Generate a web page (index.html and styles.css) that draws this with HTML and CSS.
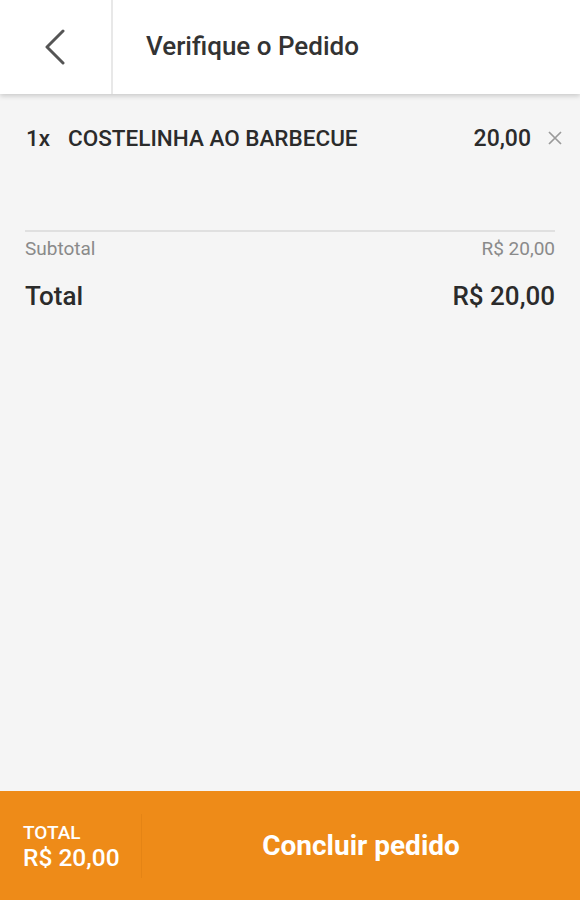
FILE: index.html
```html
<!DOCTYPE html>
<html lang="pt-BR">
<head>
<meta charset="utf-8">
<title>Verifique o Pedido</title>
<link rel="stylesheet" href="styles.css">
</head>
<body>
<div class="app">
  <header class="topbar">
    <button class="back" aria-label="Voltar">
      <svg width="24" height="36" viewBox="0 0 24 36"><path d="M19 2 L3 18 L19 34" fill="none" stroke="#555" stroke-width="3" stroke-linecap="round" stroke-linejoin="round"/></svg>
    </button>
    <h1 class="title">Verifique o Pedido</h1>
  </header>
  <main class="content">
    <div class="item">
      <span class="qty">1x</span>
      <span class="name">COSTELINHA AO BARBECUE</span>
      <span class="price">20,00</span>
      <span class="remove">
        <svg width="16" height="16" viewBox="0 0 16 16"><path d="M2 2 L14 14 M14 2 L2 14" stroke="#9a9a9a" stroke-width="1.7" fill="none"/></svg>
      </span>
    </div>
    <div class="summary">
      <div class="row sub"><span>Subtotal</span><span>R$ 20,00</span></div>
      <div class="row total"><span>Total</span><span>R$ 20,00</span></div>
    </div>
  </main>
  <footer class="bottombar">
    <div class="foot-total">
      <span class="foot-label">TOTAL</span>
      <span class="foot-value">R$ 20,00</span>
    </div>
    <button class="confirm">Concluir pedido</button>
  </footer>
</div>
</body>
</html>
```
FILE: styles.css
```css
* { box-sizing: border-box; }
html, body { margin: 0; padding: 0; }
body {
  font-family: Roboto, "Liberation Sans", sans-serif;
  background: #f5f5f5;
  color: #333;
}
.app {
  height: 900px;
  display: flex;
  flex-direction: column;
}
.topbar {
  height: 94px;
  background: #fff;
  display: flex;
  align-items: stretch;
  box-shadow: 0 2px 5px rgba(0,0,0,0.18);
  position: relative;
  z-index: 1;
  flex-shrink: 0;
}
.back {
  width: 113px;
  border: 0;
  border-right: 2px solid #e8e8e8;
  background: transparent;
  padding: 0;
  display: flex;
  align-items: center;
  justify-content: center;
}
.title {
  margin: 0 0 0 33px;
  align-self: center;
  font-size: 26px;
  font-weight: 500;
  color: #333;
  padding-bottom: 2px;
}
.content {
  flex: 1;
  padding: 0 25px;
}
.item {
  display: flex;
  align-items: center;
  height: 86px;
  padding-top: 2px;
  font-size: 22.5px;
  font-weight: 500;
  color: #2b2b2b;
}
.qty { width: 43px; padding-left: 1px; }
.name { flex: 1; }
.price { margin-right: 16px; font-size: 23px; }
.remove { display: flex; align-items: center; margin-right: -8px; }
.summary {
  margin-top: 50px;
  border-top: 2px solid #e0e0e0;
}
.row {
  display: flex;
  justify-content: space-between;
}
.row.sub {
  font-size: 19px;
  color: #8a8a8a;
  padding-top: 5px;
}
.row.total {
  font-size: 26px;
  font-weight: 500;
  color: #2b2b2b;
  padding-top: 21px;
}
.bottombar {
  height: 109px;
  background: #ee8b18;
  display: flex;
  align-items: center;
  flex-shrink: 0;
}
.foot-total {
  width: 142px;
  height: 64px;
  border-right: 1px solid rgba(160,80,0,0.12);
  display: flex;
  flex-direction: column;
  justify-content: center;
  padding-left: 23px;
  padding-top: 4px;
  color: #fff;
  font-weight: 500;
}
.foot-label { font-size: 19px; line-height: 20px; }
.foot-value { font-size: 24.5px; line-height: 30px; }
.confirm {
  flex: 1;
  height: 100%;
  border: 0;
  background: transparent;
  color: #fff;
  font-family: inherit;
  font-size: 28px;
  font-weight: 700;
  padding: 0;
}
```
